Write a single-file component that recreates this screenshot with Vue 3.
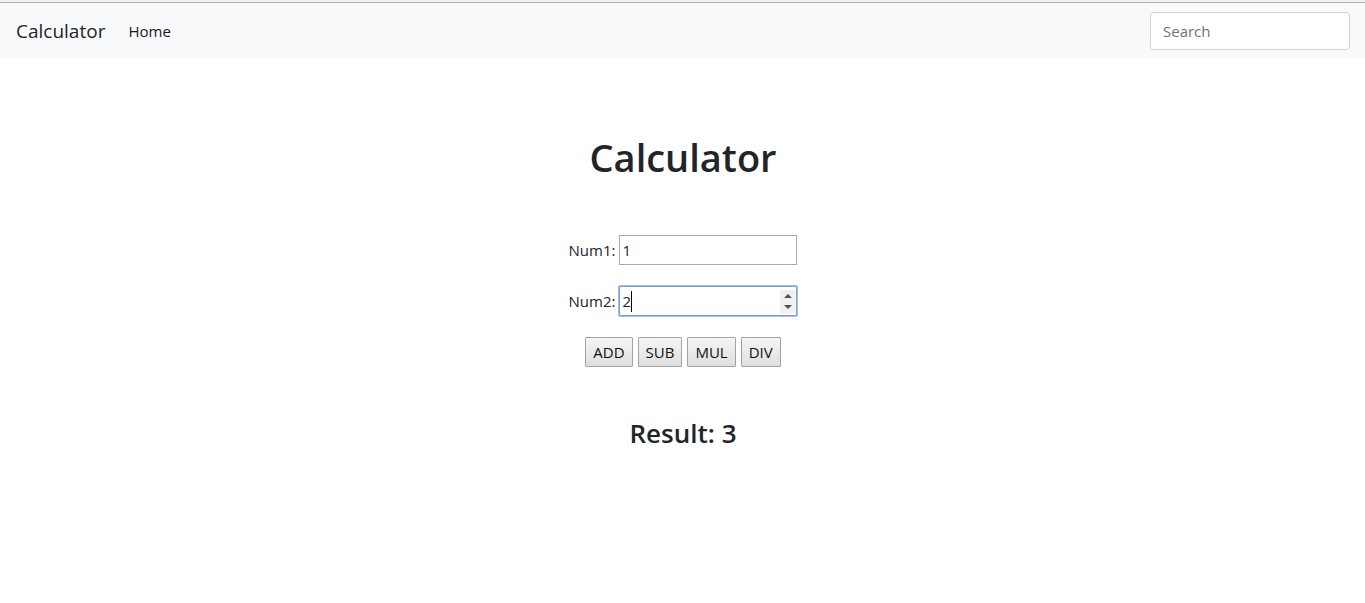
<script setup>
import { ref } from 'vue'

const query = ref('')
const num1 = ref(1)
const num2 = ref(2)
const result = ref(3)

const operations = [
  { name: 'ADD', run: (a, b) => a + b },
  { name: 'SUB', run: (a, b) => a - b },
  { name: 'MUL', run: (a, b) => a * b },
  { name: 'DIV', run: (a, b) => a / b },
]

function step(amount) {
  num2.value = Number(num2.value) + amount
}

function calculate(operation) {
  result.value = operation.run(Number(num1.value), Number(num2.value))
}
</script>

<template>
  <div class="page">
    <nav class="navbar">
      <a class="brand" href="#">Calculator</a>
      <a class="nav-link" href="#">Home</a>
      <input v-model="query" class="search" type="search" placeholder="Search" aria-label="Search" />
    </nav>

    <main class="main">
      <h1 class="title">Calculator</h1>

      <form class="form" @submit.prevent>
        <div class="row">
          <label for="num1">Num1:</label>
          <div class="field">
            <input id="num1" v-model="num1" type="number" />
          </div>
        </div>
        <div class="row">
          <label for="num2">Num2:</label>
          <div class="field active">
            <input id="num2" v-model="num2" type="number" />
            <span class="caret"></span>
            <div class="spinner">
              <button type="button" aria-label="Increase" @click="step(1)">
                <svg width="8" height="4" viewBox="0 0 8 4"><path d="M0 4 4 0 8 4Z" /></svg>
              </button>
              <button type="button" aria-label="Decrease" @click="step(-1)">
                <svg width="8" height="4" viewBox="0 0 8 4"><path d="M0 0 4 4 8 0Z" /></svg>
              </button>
            </div>
          </div>
        </div>
        <div class="actions">
          <button
            v-for="operation in operations"
            :key="operation.name"
            class="action"
            type="button"
            @click="calculate(operation)"
          >{{ operation.name }}</button>
        </div>
      </form>

      <h3 class="result">Result: {{ result }}</h3>
    </main>
  </div>
</template>

<style>
body {
  margin: 0;
  background: #fff;
}
</style>

<style scoped>
.page,
.page * {
  box-sizing: border-box;
}

.page {
  border-top: 2px solid #f1f2f4;
  color: #212529;
  font-family: "Segoe UI", "Open Sans", "Noto Sans", sans-serif;
  font-size: 15px;
  line-height: 24px;
}

input,
button {
  font: inherit;
  color: inherit;
}

.navbar {
  display: flex;
  align-items: center;
  gap: 23px;
  padding: 9px 15px 8px 16px;
  border-top: 1px solid #adb0b4;
  background: #f8f9fb;
}

.brand {
  color: #212529;
  font-size: 19px;
  line-height: 30px;
  text-decoration: none;
}

.nav-link {
  color: #16181b;
  text-decoration: none;
}

.search {
  width: 200px;
  height: 38px;
  margin-left: auto;
  padding: 6px 12px;
  border: 1px solid #ced4da;
  border-radius: 4px;
  background: #fff;
  appearance: none;
  outline: none;
}

.search::placeholder {
  color: #6c757d;
  opacity: 1;
}

.main {
  display: flex;
  flex-direction: column;
  align-items: center;
  padding: 75px 15px 0 16px;
}

.title {
  margin: 0;
  font-size: 38px;
  font-weight: 600;
  line-height: 48px;
}

.form {
  display: flex;
  flex-direction: column;
  align-items: center;
  gap: 21px;
  margin-top: 54px;
}

.row {
  display: flex;
  align-items: center;
  gap: 4px;
}

.field {
  position: relative;
  width: 178px;
  height: 30px;
  border: 1px solid #a9a9a9;
  background: #fff;
}

.field.active {
  border-color: #7a9fd6;
  border-radius: 1px;
  box-shadow: 0 0 0 1px #a4bfe6;
}

.field input {
  width: 100%;
  height: 100%;
  padding: 0 2px;
  border: 0;
  background: transparent;
  outline: none;
  appearance: textfield;
}

.field input::-webkit-inner-spin-button {
  display: none;
}

.caret {
  position: absolute;
  top: 4px;
  left: 11px;
  width: 1px;
  height: 21px;
  background: #000;
}

.spinner {
  position: absolute;
  top: 3px;
  right: 1px;
  bottom: 2px;
  display: flex;
  flex-direction: column;
  width: 15px;
  background: #f0f0f0;
}

.spinner button {
  display: flex;
  flex: 1;
  align-items: center;
  justify-content: center;
  padding: 0;
  border: 0;
  background: transparent;
}

.spinner svg {
  fill: #505050;
}

.actions {
  display: flex;
  gap: 5px;
}

.action {
  height: 30px;
  padding: 0 7px;
  border: 1px solid #a3a3a3;
  border-radius: 1px;
  background: linear-gradient(#f6f6f6, #dedede);
  color: #111;
}

.result {
  margin: 48px 0 0;
  font-size: 26px;
  font-weight: 600;
  line-height: 36px;
}
</style>
